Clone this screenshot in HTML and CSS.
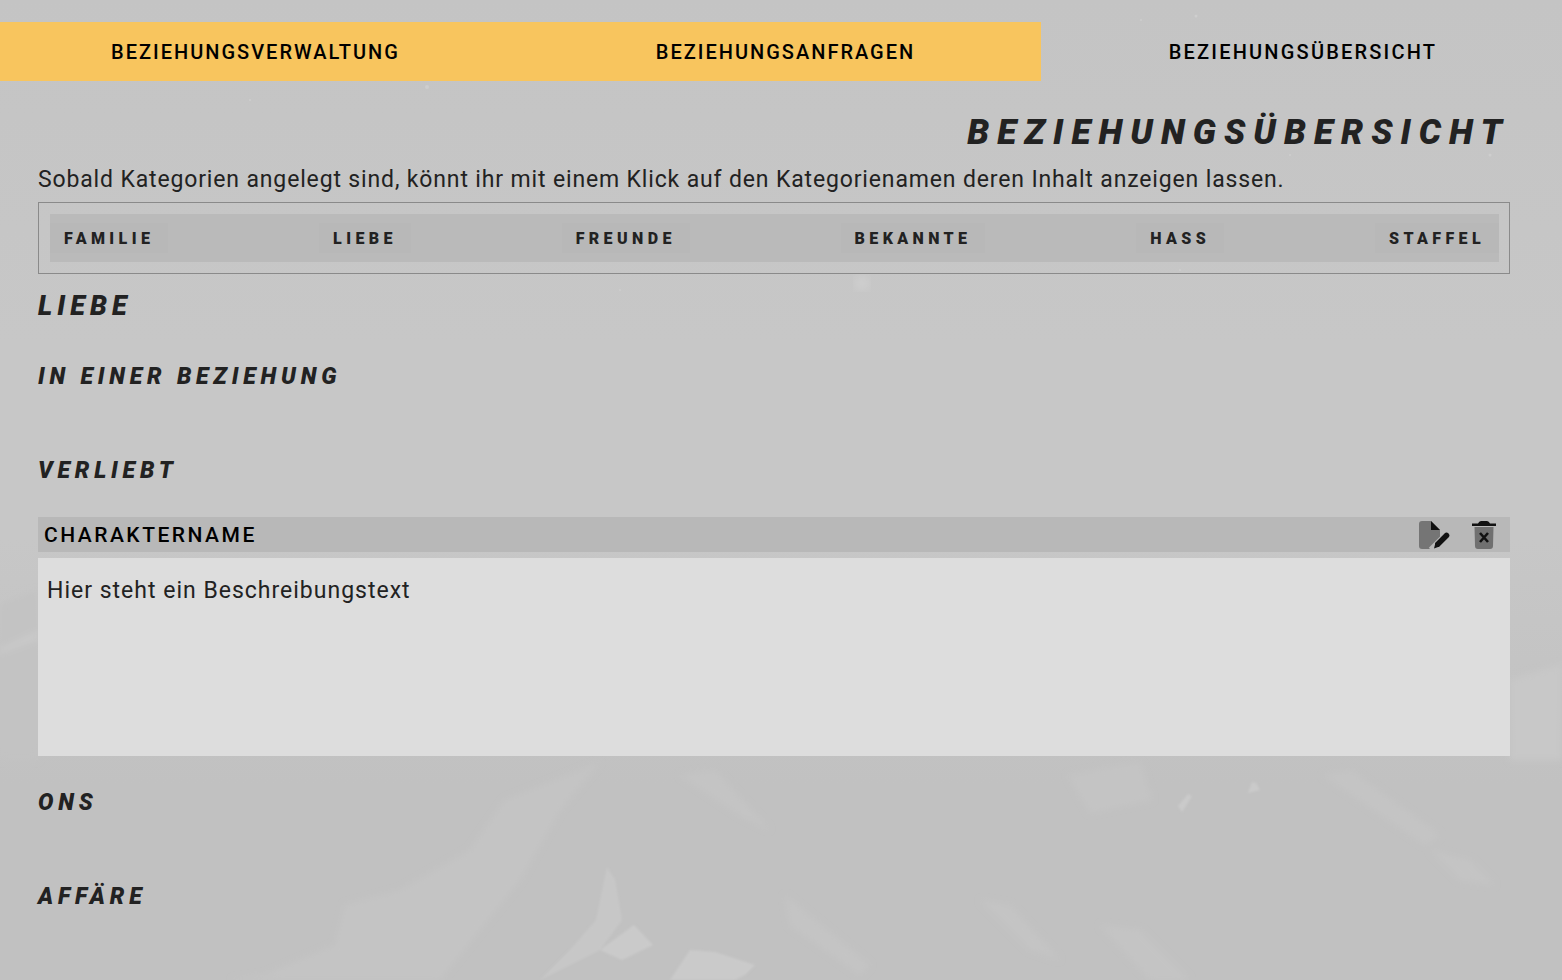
FILE: index.html
```html
<!DOCTYPE html>
<html lang="de">
<head>
    <meta charset="UTF-8">
    <meta name="viewport" content="width=device-width, initial-scale=1.0">
    <title>Beziehungsübersicht</title>
    <link rel="stylesheet" href="styles.css">
</head>
<body>

    <!-- Hintergrundbild: Berge -->
    <svg class="backdrop" viewBox="0 0 1562 980" preserveAspectRatio="none" aria-hidden="true">
        <defs>
            <filter id="soft"><feGaussianBlur stdDeviation="3"/></filter>
            <filter id="softer"><feGaussianBlur stdDeviation="5"/></filter>
            <filter id="tiny"><feGaussianBlur stdDeviation=".8"/></filter>
        </defs>
        <circle cx="862" cy="283" r="7" fill="#d0d0d0" filter="url(#softer)"/>
        <g fill="#cecece">
            <circle cx="427" cy="87" r="2"/><circle cx="1196" cy="16" r="1.500"/><circle cx="1141" cy="20" r="1"/>
            <circle cx="1290" cy="155" r="1"/><circle cx="1490" cy="155" r="1.500"/><circle cx="250" cy="100" r="1"/>
            <circle cx="620" cy="290" r="1"/><circle cx="1180" cy="270" r="1"/>
        </g>
        <g filter="url(#soft)" fill="#c4c4c4">
            <path fill="#c3c3c3" d="M0 604 L38 590 L38 760 L0 760 Z"/>
            <path fill="#c9c9c9" d="M0 648 L38 630 L38 640 L0 654 Z"/>
            <path fill="#c8c8c8" d="M1510 680 L1562 664 L1562 760 L1510 760 Z"/>
            <path d="M600 762 L530 790 L505 800 L470 850 L400 890 L345 905 L335 945 L265 975 L230 980 L440 980 L520 880 L560 810 Z"/>
            <path d="M1068 775 L1140 762 L1152 800 L1090 813 Z"/>
            <path d="M1323 775 L1350 770 L1440 835 L1425 845 Z"/>
            <path d="M1430 850 L1470 860 L1495 885 L1460 880 Z"/>
            <path d="M1100 925 L1140 930 L1190 980 L1150 980 Z"/>
            <path d="M980 900 L1010 905 L1060 960 L1030 950 Z"/>
            <path d="M785 895 L870 965 L860 975 L790 925 Z"/>
            <path d="M680 775 L715 770 L770 830 L740 815 Z"/>
        </g>
        <g fill="#cacaca" filter="url(#tiny)">
            <path d="M1252 782 L1256 783 L1260 790 L1248 793 Z"/>
            <path d="M1188 794 L1192 796 L1182 812 L1178 806 Z"/>
            <path fill="#c7c7c7" d="M607 867 L615 880 L622 920 L600 950 L540 980 L570 950 L596 920 Z"/>
            <path d="M634 925 L653 945 L622 960 L600 950 Z"/>
            <path d="M690 950 L715 952 L755 965 L745 975 L735 980 L670 980 Z"/>
        </g>
    </svg>

    <nav class="tabs">
        <a class="tab tab-first">Beziehungsverwaltung</a>
        <a class="tab tab-second">Beziehungsanfragen</a>
        <a class="tab tab-active">Beziehungsübersicht</a>
    </nav>

    <main class="content">
        <h1 class="page-title">Beziehungsübersicht</h1>
        <p class="intro">Sobald Kategorien angelegt sind, könnt ihr mit einem Klick auf den Kategorienamen deren Inhalt anzeigen lassen.</p>

        <div class="category-box">
            <div class="category-bar">
                <a class="category">Familie</a>
                <a class="category">Liebe</a>
                <a class="category">Freunde</a>
                <a class="category">Bekannte</a>
                <a class="category">Hass</a>
                <a class="category">Staffel</a>
            </div>
        </div>

        <h2 class="category-title">Liebe</h2>

        <h3 class="group-title group-first">In einer Beziehung</h3>
        <h3 class="group-title">Verliebt</h3>

        <div class="entry">
            <div class="entry-head">
                <span class="entry-name">Charaktername</span>
                <span class="entry-icons">
                    <svg width="32" height="30" viewBox="0 0 32 30">
                        <path fill="#757575" d="M4 1 H13 L22 10 V29 H4 Q1 29 1 26 V4 Q1 1 4 1 Z"/>
                        <path fill="#111" d="M13 1 L22 10 H13 Z"/>
                        <path stroke="#b8b8b8" stroke-width="9" d="M14 31 L29 16"/>
                        <path stroke="#111" stroke-width="5.500" stroke-linecap="round" d="M20 24 L28.500 15.500"/>
                        <path fill="#111" d="M16 28.500 L17.500 22.500 L21.500 26.500 Z"/>
                    </svg>
                    <svg width="26" height="30" viewBox="0 0 26 30">
                        <path fill="#111" d="M1 3.500 H7 Q8 1 10 1 H16 Q18 1 19 3.500 H25 V6 H1 Z"/>
                        <path fill="#707070" d="M3.500 7 H22.500 L22 26 Q22 29 19 29 H7 Q4 29 4 26 Z"/>
                        <path stroke="#111" stroke-width="2.600" d="M9 13 L17 22 M17 13 L9 22"/>
                    </svg>
                </span>
            </div>
            <div class="entry-text">Hier steht ein Beschreibungstext</div>
        </div>

        <h3 class="group-title group-ons">ONS</h3>
        <h3 class="group-title">Affäre</h3>
    </main>

</body>
</html>
```

FILE: styles.css
```css
body {
    margin: 0;
    height: 980px;
    overflow: hidden;
    position: relative;
    background: linear-gradient(#c4c4c4, #c7c7c7 35%, #c7c7c7 55%, #c1c1c1 80%, #c1c1c1);
    font-family: "Roboto", "Liberation Sans", sans-serif;
    color: #222;
}
.backdrop {
    position: absolute;
    top: 0;
    left: 0;
    width: 100%;
    height: 100%;
    z-index: -1;
}
.tabs {
    display: flex;
    height: 59px;
    padding-top: 22px;
}
.tab {
    display: flex;
    align-items: center;
    justify-content: center;
    font-size: 20px;
    font-weight: 500;
    letter-spacing: 2px;
    text-transform: uppercase;
    color: #000;
}
.tab-first {
    width: 509px;
    padding-left: 1px;
    background: #f8c55e;
}
.tab-second {
    width: 511px;
    padding-left: 20px;
    background: #f8c55e;
}
.tab-active {
    flex: 1;
    padding-left: 3px;
    letter-spacing: 2.200px;
}
.content {
    padding: 0 52px 0 38px;
}
.page-title {
    margin: 34px 0 0;
    text-align: right;
    font-size: 35px;
    line-height: 36px;
    font-weight: 900;
    font-style: italic;
    letter-spacing: 8.050px;
    text-transform: uppercase;
}
.intro {
    margin: 14px 0 0;
    font-size: 23px;
    line-height: 30px;
    letter-spacing: .85px;
}
.category-box {
    margin: 7px 0 0;
    padding: 11px 10px 11px 11px;
    border: 1px solid #8a8a8a;
}
.category-bar {
    display: flex;
    justify-content: space-between;
    align-items: center;
    height: 48px;
    background: #bababa;
}
.category {
    padding: 1px 14px 0;
    line-height: 29px;
    background: #b8b8b8;
    font-size: 16px;
    font-weight: 900;
    letter-spacing: 4.400px;
    text-transform: uppercase;
}
.category-title {
    margin: 16px 0 0;
    font-size: 27px;
    line-height: 32px;
    font-weight: 900;
    font-style: italic;
    letter-spacing: 5.100px;
    text-transform: uppercase;
}
.group-title {
    margin: 0;
    height: 94px;
    font-size: 23px;
    line-height: 26px;
    font-weight: 900;
    font-style: italic;
    letter-spacing: 4.800px;
    text-transform: uppercase;
}
.group-first {
    margin-top: 42px;
}
.entry {
    margin-top: -35px;
}
.entry-head {
    display: flex;
    justify-content: space-between;
    align-items: center;
    height: 35px;
    padding: 0 13px 0 6px;
    background: #b8b8b8;
}
.entry-name {
    font-size: 21px;
    font-weight: 500;
    letter-spacing: 2.500px;
    text-transform: uppercase;
    color: #000;
}
.entry-icons {
    display: flex;
    align-items: center;
    gap: 21px;
}
.entry-text {
    height: 198px;
    margin-top: 6px;
    padding: 20px 9px 0;
    box-sizing: border-box;
    background: #dddddd;
    font-size: 23px;
    line-height: 26px;
    letter-spacing: 1px;
}
.group-ons {
    margin-top: 34px;
}
```
